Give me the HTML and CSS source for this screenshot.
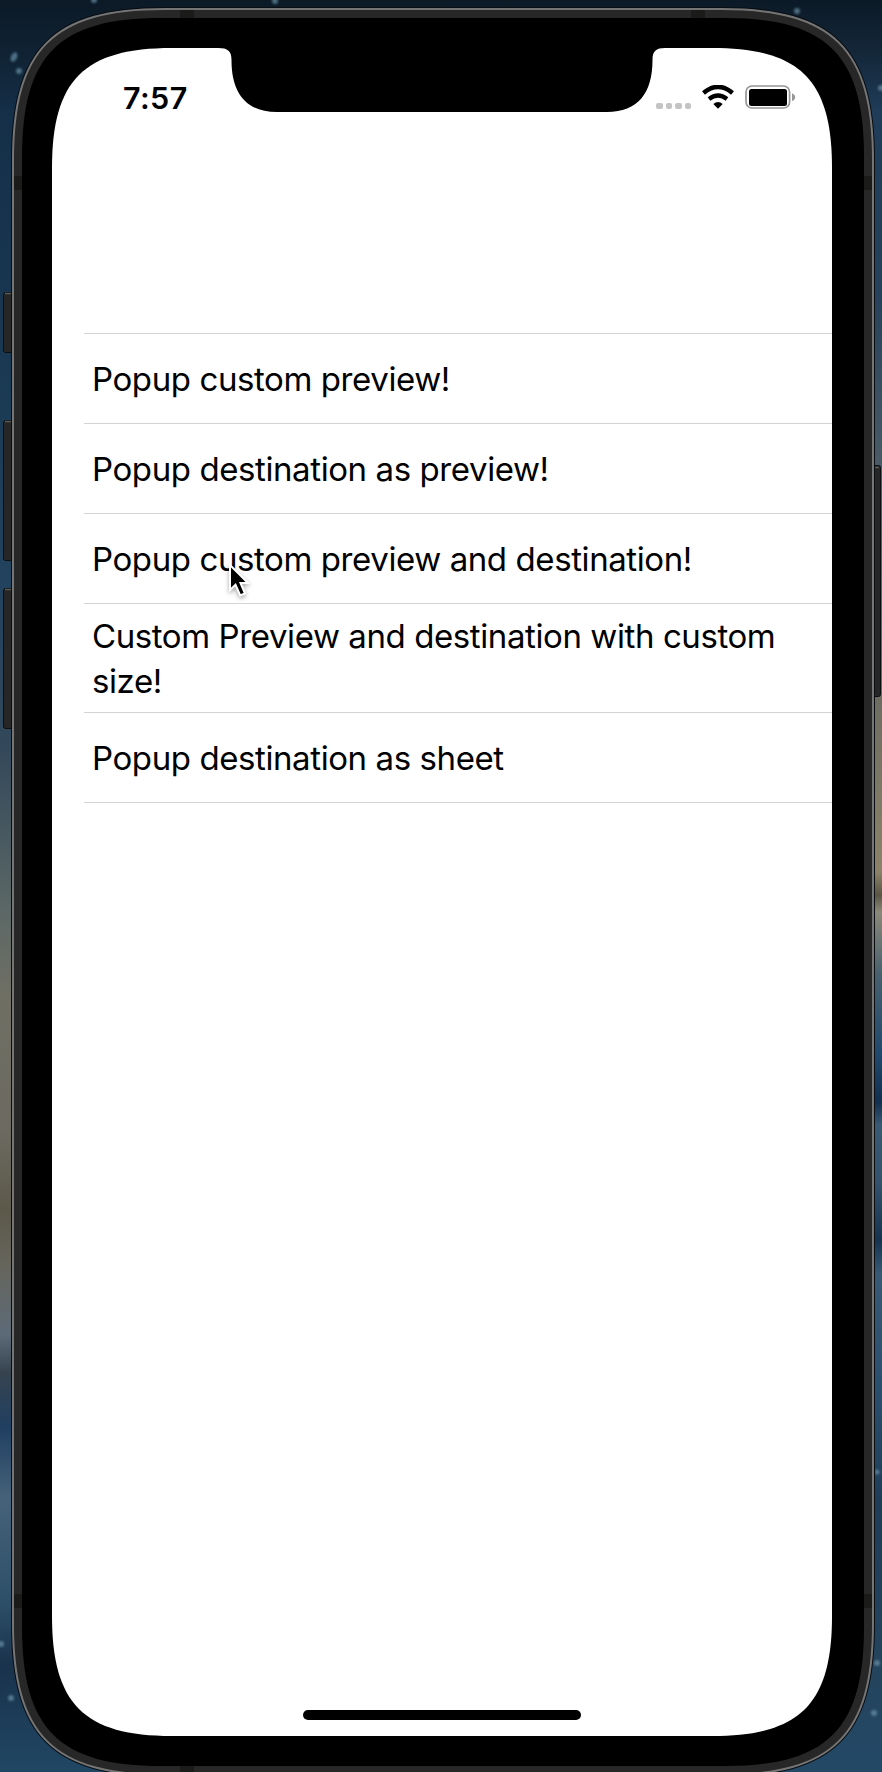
FILE: index.html
```
<!DOCTYPE html>
<html lang="en">
<head>
<meta charset="utf-8">
<title>Popup list</title>
<link rel="stylesheet" href="styles.css">
</head>
<body>
<div class="desktop">
  <svg class="device" viewBox="0 0 882 1772" width="882" height="1772" aria-hidden="true">
    <defs>
      <filter id="soft" x="-100%" y="-100%" width="300%" height="300%"><feGaussianBlur stdDeviation="1.2"/></filter>
      <path id="frame" d="M13 160c0-111 40-151 151-151H722c111 0 151 40 151 151V1624c0 111-40 151-151 151H164c-111 0-151-40-151-151Z"/>
    </defs>
    <!-- stars -->
    <g fill="#6f98ae" opacity=".65" filter="url(#soft)">
      <ellipse cx="14" cy="57" rx="3" ry="5" transform="rotate(25 14 57)"/><circle cx="19" cy="71" r="3"/>
      <circle cx="94" cy="0" r="3"/><circle cx="275" cy="1" r="3"/><circle cx="797" cy="11" r="3"/>
      <circle cx="881" cy="88" r="3"/><circle cx="877" cy="1472" r="2.500"/><circle cx="877" cy="1663" r="3"/>
      <circle cx="874" cy="1713" r="3"/><circle cx="11" cy="1698" r="3"/><circle cx="1" cy="1644" r="3"/>
    </g>
    <!-- side buttons -->
    <g fill="#262626" stroke="#0b0f13">
      <rect x="3.5" y="292.5" width="12" height="60" rx="2"/>
      <rect x="3.5" y="420.500" width="12" height="140" rx="2"/>
      <rect x="3.5" y="588.5" width="12" height="140" rx="2"/>
      <rect x="870.5" y="465.5" width="10" height="231" rx="2"/>
    </g>
    <path d="M5 293.500H12M5 421.500H12M5 589.500H12M874 467.500H879" stroke="#5a5a5a" stroke-width="1.5"/>
    <!-- metal frame -->
    <use href="#frame" stroke="#080d12" stroke-width="4"/>
    <use href="#frame" fill="#272727" stroke="#757575" stroke-width="2"/>
    <path d="M180 10h14v8h-14ZM691 10h14v8h-14ZM14 176h8v14h-8ZM864 176h8v14h-8ZM14 1594h8v14h-8ZM864 1594h8v14h-8ZM180 1766h14v6h-14Z" fill="#1b1b19"/>
    <!-- bezel -->
    <path d="M22 157c0-102 37-139 139-139H725c102 0 139 37 139 139V1627c0 102-37 139-139 139H161c-102 0-139-37-139-139Z"/>
    <!-- display -->
    <path d="M52 168c0-88 32-120 120-120H712c88 0 120 32 120 120V1616c0 88-32 120-120 120H172c-88 0-120-32-120-120Z" fill="#fff"/>
    <!-- notch -->
    <path d="M218 47.500V48C228 48 231.500 51 231.500 60C231.500 93 246 112 277 112H607C638 112 652.500 93 652.500 60C652.500 51 656 48 665 48V47.500Z"/>
  </svg>

  <main class="screen">
    <header class="status">
      <time class="clock">7:57</time>
      <div class="indicators">
        <div class="signal"><i></i><i></i><i></i><i></i></div>
        <svg class="wifi" viewBox="0 0 32 24" width="32" height="24" aria-label="Wi-Fi">
          <path d="M1.500 8Q16-4.200 30.500 8" fill="none" stroke="#000" stroke-width="4.500"/>
          <path d="M7 14Q16 7 25 14" fill="none" stroke="#000" stroke-width="4.300"/>
          <path d="M11.300 19Q16 15 20.700 19L16 23.800Z"/>
        </svg>
        <svg class="battery" viewBox="0 0 51 24" width="51" height="24" aria-label="Battery full">
          <rect x="1" y="1" width="43.600" height="22" rx="6" fill="none" stroke="#969696" stroke-width="1.700"/>
          <rect x="4" y="4" width="38" height="17" rx="2.500"/>
          <path d="M47 8.500c4.200 1 4.200 6.500 0 7.500Z" fill="#969696"/>
        </svg>
      </div>
    </header>
    <ul class="list">
      <li class="row">Popup custom preview!</li>
      <li class="row">Popup destination as preview!</li>
      <li class="row">Popup custom preview and destination!</li>
      <li class="row row-tall">Custom Preview and destination with custom<br>size!</li>
      <li class="row">Popup destination as sheet</li>
    </ul>
    <div class="home-bar"></div>
  </main>

  <svg class="cursor" viewBox="0 0 28 40" width="28" height="40" aria-hidden="true">
    <path d="M3 3V28L8.500 22.800L13.200 33.500L18 31.500L13.500 21H21Z" fill="#000" stroke="#fff" stroke-width="2"/>
  </svg>
</div>
</body>
</html>
```
FILE: styles.css
```
body {
  margin: 0;
  overflow: hidden;
}

.desktop {
  position: relative;
  display: grid;
  width: 882px;
  height: 1772px;
  font-family: Inter, "Liberation Sans", sans-serif;
  color: #000;
  background:
    linear-gradient(#0c1a27 0, rgba(12, 26, 39, 0) 110px),
    linear-gradient(#12283c 0, #152f48 110px, #1b3a54 400px, #24435e 600px, #33485a 750px, #5c6866 913px, #6f6f64 994px, #6c6a60 1130px, #5c594b 1210px, #66655c 1265px, #5c6a78 1335px, #36434f 1373px, #203f61 1427px, #46627a 1498px, #2d5068 1600px, #1a324c 1665px, #204764 1772px) left / 50% 100% no-repeat,
    linear-gradient(#1a3046 0, #1f3c58 110px, #27425a 300px, #4a5a66 460px, #6d6b62 690px, #8b8268 872px, #5a5444 895px, #8b8878 912px, #48606e 975px, #20486c 1056px, #122f4e 1102px, #3a5973 1125px, #34526c 1182px, #16344f 1240px, #395975 1274px, #2a4f6d 1389px, #203d58 1500px, #24435c 1660px, #234967 1772px) right / 50% 100% no-repeat;
}

.device,
.screen {
  grid-area: 1 / 1;
}

.device {
  display: block;
}

.screen {
  display: flex;
  flex-direction: column;
  z-index: 1;
  margin: 48px 50px 36px 52px;
}

.status {
  display: flex;
  justify-content: space-between;
  height: 285px;
  padding: 0 36px 0 71px;
  box-sizing: border-box;
}

.clock {
  padding-top: 32px;
  font-size: 30.500px;
  font-weight: 600;
  line-height: 36px;
  letter-spacing: 0.4px;
}

.indicators {
  display: flex;
  align-items: flex-start;
  padding-top: 37px;
}

.signal {
  display: flex;
  gap: 3px;
  padding: 18px 11px 0 0;
}

.signal i {
  width: 6.400px;
  height: 6.400px;
  border-radius: 2px;
  background: #c4c4c4;
}

.wifi {
  margin-right: 11px;
}

.list {
  margin: 0 0 0 32px;
  padding: 0;
  list-style: none;
  border-top: 1px solid #d3d3d5;
}

.row {
  display: flex;
  align-items: center;
  height: 90px;
  padding: 1px 0 0 8px;
  box-sizing: border-box;
  border-bottom: 1px solid #d3d3d5;
  font-size: 33px;
  line-height: 45px;
  letter-spacing: -0.410px;
  white-space: nowrap;
}

.row-tall {
  display: block;
  height: 109px;
  padding-top: 10px;
}

.home-bar {
  width: 278px;
  height: 10px;
  margin: auto auto 16px 251px;
  border-radius: 5px;
  background: #000;
}

.cursor {
  position: absolute;
  z-index: 2;
  left: 227px;
  top: 562px;
  filter: drop-shadow(0 2px 2px rgba(0, 0, 0, .35));
}
```
